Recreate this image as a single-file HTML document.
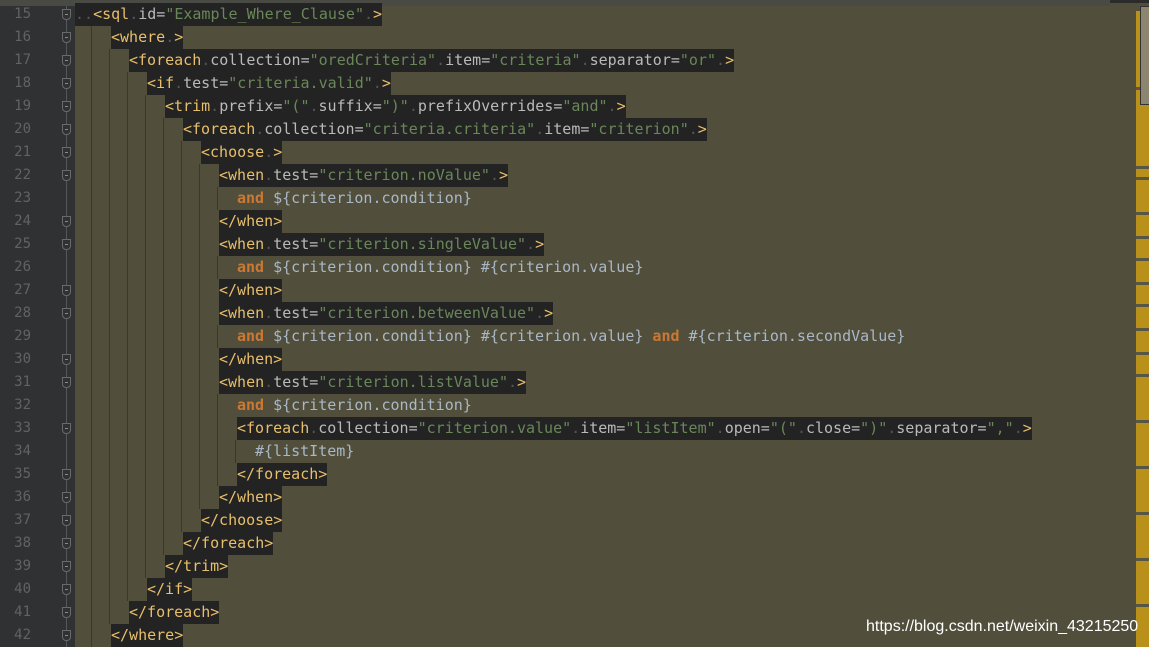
<!DOCTYPE html><html><head><meta charset="utf-8"><style>
body{margin:0;width:1149px;height:647px;overflow:hidden;background:#514f3b;position:relative;font-family:"DejaVu Sans Mono","Liberation Mono",monospace;font-size:15px}
#g{position:absolute;left:0;top:0;width:75px;height:647px;background:#2f3133}
#gl{position:absolute;left:66px;top:0;width:1px;height:647px;background:#55575a}
#top{position:absolute;left:0;top:0;width:1149px;height:3px;background:#2b2b2b}
#top2{position:absolute;left:0;top:0;width:1110px;height:6px;background:#4a4a45}
.ln{position:absolute;left:0;width:31px;text-align:right;color:#606366;font-size:14px;line-height:23px}
.fold{position:absolute;left:62px;width:9px;height:11px;border:1px solid #6a6a6a;background:#2f3133;border-radius:0 0 4px 4px;box-sizing:border-box}
.fold:after{content:"";position:absolute;left:2px;top:4px;width:3px;height:1px;background:#8a8a8a}
.row{position:absolute;height:23px;line-height:23px;white-space:pre;color:#a9b7c6}
.d{background:#232323;display:inline-block;height:23px}
.t{color:#e8bf6a}.a{color:#bababa}.v{color:#6a8759}.k{color:#cc7832;font-weight:bold}.s{color:#555}
.gd{position:absolute;width:1px;background:#3a3828}
#sb{position:absolute;left:1136px;top:11px;width:13px;height:636px;background:#b8901a}
.sep{position:absolute;left:1136px;width:13px;height:3px;background:#575543}
#thumb{position:absolute;left:1140px;top:6px;width:9px;height:97px;background:#8c8670;border:1px solid #333}
#wm{position:absolute;left:866px;top:618px;color:#fff;font-family:"Liberation Sans",sans-serif;font-size:16px}
</style></head><body>
<div id="g"></div><div id="gl"></div><div id="top"></div><div id="top2"></div>
<div id="sb"></div>
<div class="sep" style="top:87px"></div><div class="sep" style="top:166px"></div><div class="sep" style="top:177px"></div>
<div class="sep" style="top:212px"></div><div class="sep" style="top:236px"></div><div class="sep" style="top:258px"></div>
<div class="sep" style="top:282px"></div><div class="sep" style="top:304px"></div><div class="sep" style="top:328px"></div>
<div class="sep" style="top:352px"></div><div class="sep" style="top:374px"></div><div class="sep" style="top:420px"></div>
<div class="sep" style="top:466px"></div><div class="sep" style="top:512px"></div><div class="sep" style="top:558px"></div><div class="sep" style="top:604px"></div>
<div id="thumb"></div>
<div id="wm">https://blog.csdn.net/weixin_43215250</div>
<script>
function tag(n,attrs,close){var s='<span class="t">&lt;'+n+'</span>';attrs.forEach(function(p){s+='<span class="s">.</span><span class="a">'+p[0]+'=</span><span class="v">"'+p[1]+'"</span>'});s+='<span class="s">.</span><span class="t">&gt;</span>';return s}
function ct(n){return '<span class="t">&lt;/'+n+'&gt;</span>'}
var A='<span class="k">and</span> ${criterion.condition}';
var L=[
[2,tag('sql',[['id','Example_Where_Clause']]),1],
[4,tag('where',[]),1],
[6,tag('foreach',[['collection','oredCriteria'],['item','criteria'],['separator','or']]),1],
[8,tag('if',[['test','criteria.valid']]),1],
[10,tag('trim',[['prefix','('],['suffix',')'],['prefixOverrides','and']]),1],
[12,tag('foreach',[['collection','criteria.criteria'],['item','criterion']]),1],
[14,tag('choose',[]),1],
[16,tag('when',[['test','criterion.noValue']]),1],
[18,A,0],
[16,ct('when'),1],
[16,tag('when',[['test','criterion.singleValue']]),1],
[18,A+' #{criterion.value}',0],
[16,ct('when'),1],
[16,tag('when',[['test','criterion.betweenValue']]),1],
[18,A+' #{criterion.value} <span class="k">and</span> #{criterion.secondValue}',0],
[16,ct('when'),1],
[16,tag('when',[['test','criterion.listValue']]),1],
[18,A,0],
[18,tag('foreach',[['collection','criterion.value'],['item','listItem'],['open','('],['close',')'],['separator',',']]),1],
[20,'#{listItem}',0],
[18,ct('foreach'),1],
[16,ct('when'),1],
[14,ct('choose'),1],
[12,ct('foreach'),1],
[10,ct('trim'),1],
[8,ct('if'),1],
[6,ct('foreach'),1],
[4,ct('where'),1]];
var h='';
L.forEach(function(l,i){var y=3+23*i,ind=l[0];
h+='<div class="ln" style="top:'+y+'px">'+(15+i)+'</div>';
if(l[2])h+='<div class="fold" style="top:'+(y+6)+'px"></div>';
for(var k=2;k<ind;k+=2){h+='<div class="gd" style="left:'+(75+9*k-2)+'px;top:'+y+'px;height:23px"></div>'}
if(i==0)h+='<div class="row" style="left:75px;top:'+y+'px"><span class="d"><span class="s">..</span>'+l[1]+'</span></div>';
else if(l[2])h+='<div class="row" style="left:'+(75+9*ind)+'px;top:'+y+'px"><span class="d">'+l[1]+'</span></div>';
else h+='<div class="row" style="left:'+(75+9*ind)+'px;top:'+y+'px">'+l[1]+'</div>';
});
document.body.insertAdjacentHTML('beforeend',h);
</script>
</body></html>
